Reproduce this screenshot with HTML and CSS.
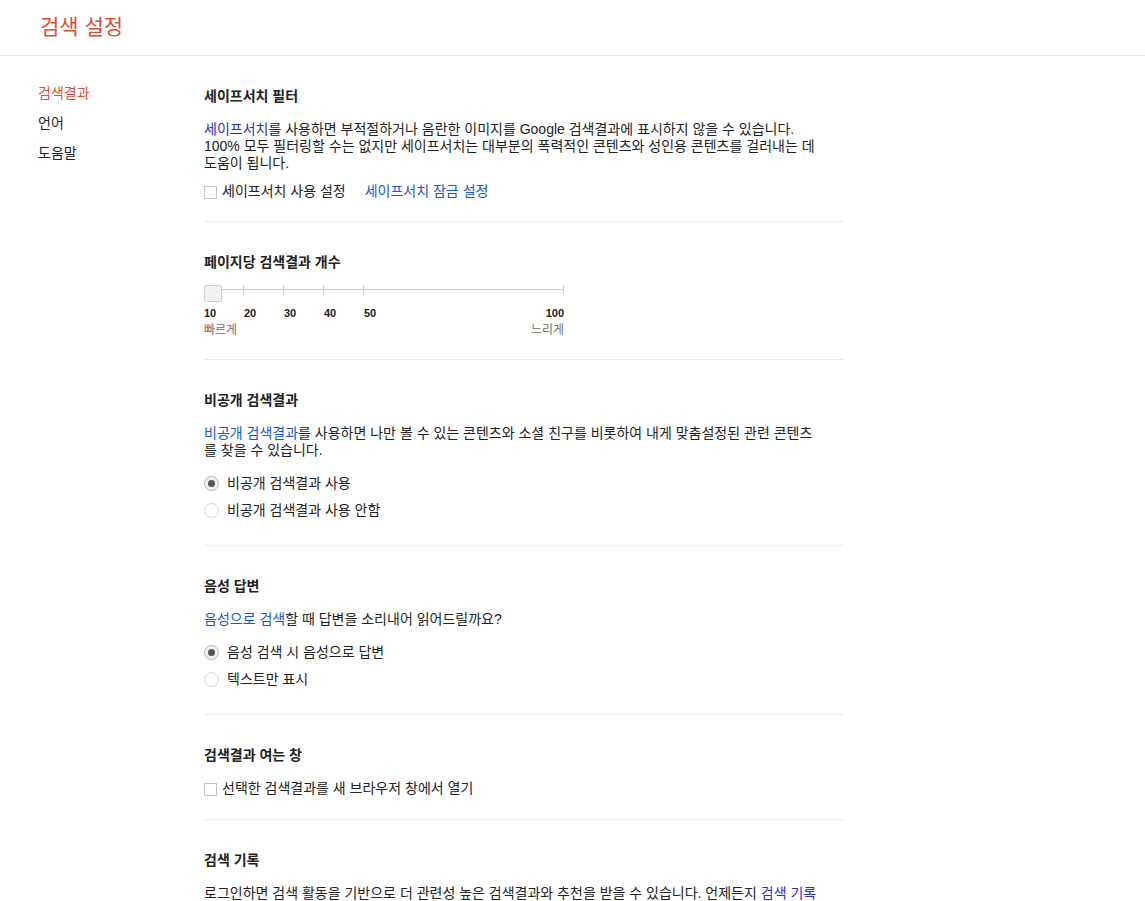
FILE: index.html
```html
<!DOCTYPE html>
<html lang="ko">
<head>
    <meta charset="UTF-8">
    <title>검색 설정</title>
    <link rel="stylesheet" href="styles.css">
</head>
<body>
<!-- Header -->
<div class="header">
    <h1 class="page-title">검색 설정</h1>
</div>

<div class="layout">
    <!-- Left navigation -->
    <ul class="side-nav">
        <li class="active">검색결과</li>
        <li>언어</li>
        <li>도움말</li>
    </ul>

    <!-- Settings -->
    <div class="settings">
        <div class="section">
            <h2>세이프서치 필터</h2>
            <p><a class="link purple" href="#">세이프서치</a>를 사용하면 부적절하거나 음란한 이미지를 Google 검색결과에 표시하지 않을 수 있습니다. 100% 모두 필터링할 수는 없지만 세이프서치는 대부분의 폭력적인 콘텐츠와 성인용 콘텐츠를 걸러내는 데 도움이 됩니다.</p>
            <div class="option-row check-row">
                <span class="checkbox"></span>
                <span>세이프서치 사용 설정</span>
                <a class="link lock-link" href="#">세이프서치 잠금 설정</a>
            </div>
        </div>

        <div class="section slider-section">
            <h2>페이지당 검색결과 개수</h2>
            <div class="slider">
                <div class="ticks">
                    <span></span><span></span><span></span><span></span><span></span>
                </div>
                <div class="thumb"></div>
            </div>
            <div class="slider-labels">
                <span>10</span><span>20</span><span>30</span><span>40</span>
                <span class="last"><span>50</span><span>100</span></span>
            </div>
            <div class="slider-speed">
                <span>빠르게</span>
                <span>느리게</span>
            </div>
        </div>

        <div class="section">
            <h2>비공개 검색결과</h2>
            <p><a class="link" href="#">비공개 검색결과</a>를 사용하면 나만 볼 수 있는 콘텐츠와 소셜 친구를 비롯하여 내게 맞춤설정된 관련 콘텐츠를 찾을 수 있습니다.</p>
            <div class="radio-group">
                <div class="option-row radio-row"><span class="radio checked"></span>비공개 검색결과 사용</div>
                <div class="option-row radio-row"><span class="radio"></span>비공개 검색결과 사용 안함</div>
            </div>
        </div>

        <div class="section">
            <h2>음성 답변</h2>
            <p><a class="link" href="#">음성으로 검색</a>할 때 답변을 소리내어 읽어드릴까요?</p>
            <div class="radio-group">
                <div class="option-row radio-row"><span class="radio checked"></span>음성 검색 시 음성으로 답변</div>
                <div class="option-row radio-row"><span class="radio"></span>텍스트만 표시</div>
            </div>
        </div>

        <div class="section">
            <h2>검색결과 여는 창</h2>
            <div class="option-row check-row no-text">
                <span class="checkbox"></span>
                <span>선택한 검색결과를 새 브라우저 창에서 열기</span>
            </div>
        </div>

        <div class="section">
            <h2>검색 기록</h2>
            <p>로그인하면 검색 활동을 기반으로 더 관련성 높은 검색결과와 추천을 받을 수 있습니다. 언제든지 <a class="link purple" href="#">검색 기록</a>을 확인하고 삭제할 수 있습니다.</p>
        </div>
    </div>
</div>
</body>
</html>
```

FILE: styles.css
```css
/* General */
* {
    margin: 0;
    padding: 0;
    box-sizing: border-box;
}

body {
    font-family: Arial, "Liberation Sans", "Noto Sans CJK KR", sans-serif;
    font-size: 14px;
    line-height: 17px;
    color: #222;
    background: #fff;
}

.link {
    color: #1558d6;
    text-decoration: none;
}
.link.purple {
    color: #2a2fc0;
}

/* Header */
.header {
    height: 56px;
    border-bottom: 1px solid #e5e5e5;
    padding-left: 40px;
    display: flex;
    align-items: center;
}
.page-title {
    font-size: 21px;
    font-weight: normal;
    color: #dd4b39;
    line-height: 24px;
    margin-top: -2px;
}

/* Layout */
.layout {
    display: flex;
}

/* Side navigation */
.side-nav {
    list-style: none;
    width: 204px;
    padding: 22px 0 0 38px;
}
.side-nav li {
    height: 30px;
    line-height: 30px;
}
.side-nav li.active {
    color: #dd4b39;
}

/* Settings column */
.settings {
    width: 640px;
}

.section {
    padding: 32px 0 21px;
    border-bottom: 1px solid #ebebeb;
}
.section h2 {
    font-size: 14px;
    font-weight: bold;
    margin-bottom: 16px;
}
.section p {
    width: 620px;
}

/* Option rows */
.option-row {
    display: flex;
    align-items: center;
}
.check-row {
    margin-top: 11px;
}
.check-row.no-text {
    margin-top: 0;
    padding-bottom: 1px;
}
.checkbox {
    width: 13px;
    height: 13px;
    border: 1px solid #c6c6c6;
    background: #fff;
    margin: 2px 5px 0 0;
}
.lock-link {
    margin-left: 19px;
}

.radio-group {
    margin-top: 11px;
}
.radio-row {
    height: 27px;
}
.radio {
    width: 15px;
    height: 15px;
    border-radius: 50%;
    border: 1px solid #d6d6d6;
    background: #fff;
    margin-right: 8px;
    display: flex;
    align-items: center;
    justify-content: center;
}
.radio.checked {
    border-color: #b8b8b8;
    background: #f1f1f1;
}
.radio.checked::after {
    content: "";
    width: 7px;
    height: 7px;
    border-radius: 50%;
    background: #555;
}

/* Results-per-page slider */
.slider-section {
    padding-bottom: 22px;
}
.slider-section h2 {
    margin-bottom: 14px;
}
.slider {
    position: relative;
    width: 360px;
    height: 17px;
}
.ticks {
    display: grid;
    grid-template-columns: repeat(4, 40px) 1fr;
    height: 9px;
    margin-top: 4px;
    background: linear-gradient(#ccc, #ccc) center / 100% 1px no-repeat;
}
.ticks span {
    border-right: 1px solid #ccc;
}
.thumb {
    position: absolute;
    top: 0;
    left: 0;
    width: 18px;
    height: 17px;
    border: 1px solid #d0d0d0;
    border-radius: 2px;
    background: #f1f1f1;
}
.slider-labels {
    display: grid;
    grid-template-columns: repeat(4, 40px) 1fr;
    width: 360px;
    margin-top: 5px;
    font-size: 11px;
    line-height: 12px;
    font-weight: bold;
}
.slider-labels .last {
    display: flex;
    justify-content: space-between;
}
.slider-speed {
    display: flex;
    justify-content: space-between;
    width: 360px;
    margin-top: 4px;
    font-size: 12px;
    line-height: 14px;
    color: #6f6f6f;
}
```
